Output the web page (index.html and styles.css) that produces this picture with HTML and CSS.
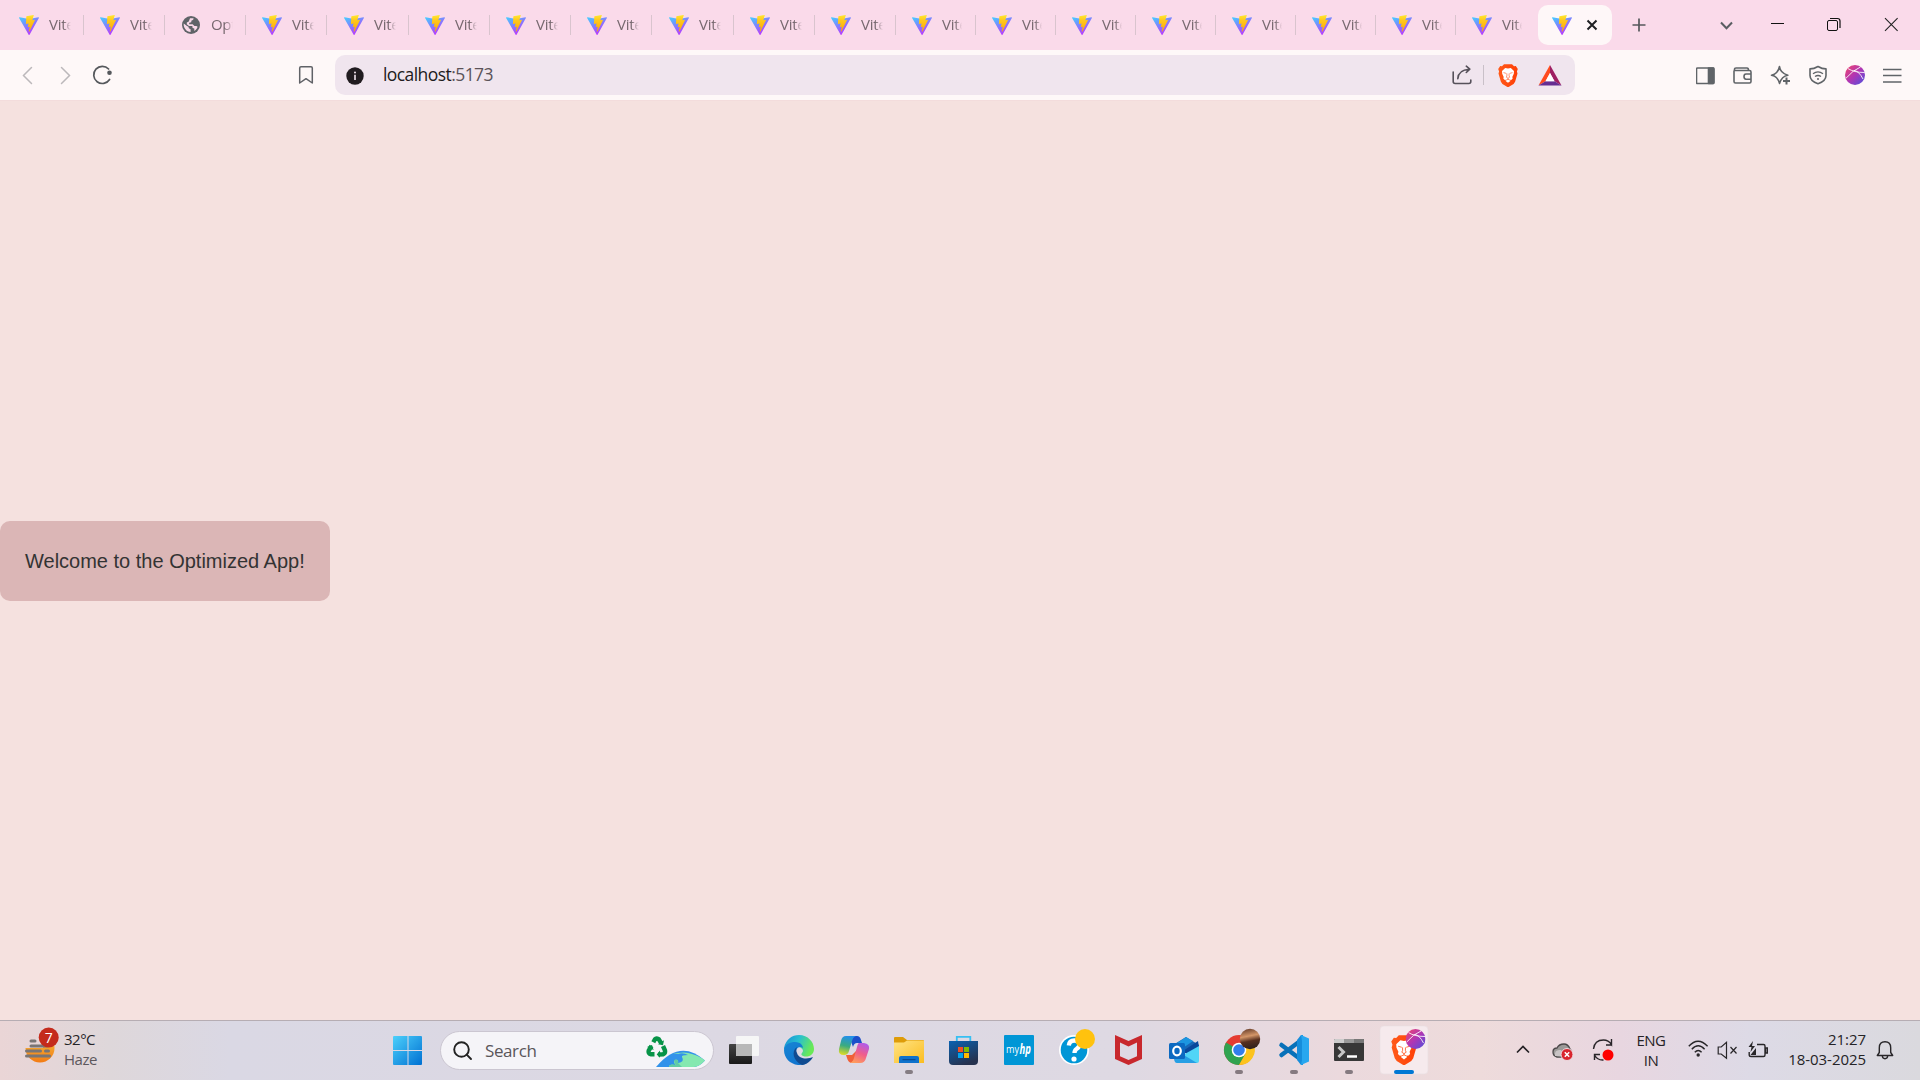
FILE: index.html
```html
<!DOCTYPE html>
<html lang="en">
<head>
<meta charset="utf-8">
<title>Vite + React</title>
<link rel="stylesheet" href="styles.css">
</head>
<body>
<svg class="defs" width="0" height="0">
  <defs>
    <linearGradient id="va" x1="0" y1="0" x2="0.6" y2="1"><stop offset="0" stop-color="#41d1ff"/><stop offset="1" stop-color="#bd34fe"/></linearGradient>
    <linearGradient id="vb" x1="0" y1="0" x2="0" y2="1"><stop offset="0" stop-color="#ffea2e"/><stop offset="0.3" stop-color="#ffc91f"/><stop offset="1" stop-color="#ffa800"/></linearGradient>
    <linearGradient id="sphere" x1="0" y1="0" x2="1" y2="1"><stop offset="0" stop-color="#f2456a"/><stop offset="0.5" stop-color="#b036b4"/><stop offset="1" stop-color="#4a52e0"/></linearGradient>
    <linearGradient id="brave" x1="0" y1="0" x2="1" y2="0"><stop offset="0" stop-color="#ff5a1a"/><stop offset="1" stop-color="#ff3f06"/></linearGradient>
    <symbol id="vite" viewBox="0 0 256 257">
      <path fill="url(#va)" d="M255.153 37.938 134.897 252.976c-2.483 4.44-8.862 4.466-11.382.048L.875 37.958c-2.746-4.814 1.371-10.646 6.827-9.67l120.385 21.517a6.537 6.537 0 0 0 2.322-.004l117.867-21.483c5.438-.991 9.574 4.796 6.877 9.62Z"/>
      <path fill="url(#vb)" d="M185.432.063 96.44 17.501a3.268 3.268 0 0 0-2.634 3.014l-5.474 92.456a3.268 3.268 0 0 0 3.997 3.378l24.777-5.718c2.318-.535 4.413 1.507 3.936 3.838l-7.361 36.047c-.495 2.426 1.782 4.5 4.151 3.78l15.304-4.649c2.372-.72 4.652 1.36 4.15 3.788l-11.698 56.621c-.732 3.542 3.979 5.473 5.943 2.437l1.313-2.028 72.516-144.72c1.215-2.423-.88-5.186-3.54-4.672l-25.505 4.922c-2.396.462-4.435-1.77-3.759-4.114l16.646-57.705c.677-2.35-1.37-4.583-3.769-4.113Z"/>
    </symbol>
    <symbol id="lion" viewBox="0 0 20 23">
      <path fill="url(#brave)" d="M6 .2h8l2 2 1.800-.2 2 3-.9 2.500.6 2-2.400 8.300-1.500 2.200L10.600 23h-1.200l-5-3-1.500-2.200L.5 9.500l.6-2L.2 5l2-3L4 2.200Z"/>
      <path fill="#fff" d="M10 4.600 12.800 4l3.200 3.100-.2 2.700-1.500 3.100.4 1.700-1.500 1.300-1-.2.2 1.200-2.400 1.900-2.400-1.900.2-1.200-1 .2-1.500-1.300.4-1.700-1.500-3.100L4 7.100 7.200 4Z"/>
      <path fill="none" stroke="#ff4a10" stroke-width=".6" d="m5.500 8.600 2.800.8M14.500 8.600l-2.800.8M8.900 9.500v2.500L8.300 13.200 10 14.300 11.700 13.200 11.100 12V9.500M10 14.200v1.300M7.700 16.300 10 15.200l2.300 1.100"/>
    </symbol>
    <symbol id="orb" viewBox="0 0 20 20">
      <circle cx="10" cy="10" r="10" fill="url(#sphere)"/>
      <path fill="none" stroke="#fff" stroke-opacity=".85" stroke-width="1" d="M3 3.600Q9 7.500 19.600 7.500M1 13.200Q8 5 15.500 2M9 5.500Q14 6 18 14"/>
    </symbol>
  </defs>
</svg>

<header class="tabstrip">
  <div class="tab first"><svg class="fav"><use href="#vite"/></svg><span class="title">Vite</span></div>
  <div class="tab"><svg class="fav"><use href="#vite"/></svg><span class="title">Vite</span></div>
  <div class="tab"><svg class="fav" viewBox="0 0 20 20"><circle cx="10" cy="10" r="9" fill="#5f6368"/><path fill="#fadaea" d="M2.700 8.500 6 11l1.500.8.300 1.500 1.800 1v2.600C5.500 16.800 2.300 13 2.700 8.500ZM9 3.200h3.500c.2 1.500-.8 2-2 2.300l-.3 1.700-2 .5v1.600h3.500l1.700 1.800h2l1.200.7c-.6 2-1.900 3.400-3.300 4.200v-2.500l-1.700-.6-.3-1.800H8L5.800 9.200V7.500l2-1Z"/></svg><span class="title">Opt</span></div>
  <div class="tab"><svg class="fav"><use href="#vite"/></svg><span class="title">Vite</span></div>
  <div class="tab wide"><svg class="fav"><use href="#vite"/></svg><span class="title">Vite</span></div>
  <div class="tab"><svg class="fav"><use href="#vite"/></svg><span class="title">Vite</span></div>
  <div class="tab"><svg class="fav"><use href="#vite"/></svg><span class="title">Vite</span></div>
  <div class="tab"><svg class="fav"><use href="#vite"/></svg><span class="title">Vite</span></div>
  <div class="tab wide"><svg class="fav"><use href="#vite"/></svg><span class="title">Vite</span></div>
  <div class="tab"><svg class="fav"><use href="#vite"/></svg><span class="title">Vite</span></div>
  <div class="tab"><svg class="fav"><use href="#vite"/></svg><span class="title">Vite</span></div>
  <div class="tab slim"><svg class="fav"><use href="#vite"/></svg><span class="title">Vite</span></div>
  <div class="tab slim"><svg class="fav"><use href="#vite"/></svg><span class="title">Vite</span></div>
  <div class="tab slim"><svg class="fav"><use href="#vite"/></svg><span class="title">Vite</span></div>
  <div class="tab slim"><svg class="fav"><use href="#vite"/></svg><span class="title">Vite</span></div>
  <div class="tab slim"><svg class="fav"><use href="#vite"/></svg><span class="title">Vite</span></div>
  <div class="tab slim"><svg class="fav"><use href="#vite"/></svg><span class="title">Vite</span></div>
  <div class="tab slim"><svg class="fav"><use href="#vite"/></svg><span class="title">Vite</span></div>
  <div class="tab slim last"><svg class="fav"><use href="#vite"/></svg><span class="title">Vite</span></div>
  <div class="active-tab"><svg class="fav"><use href="#vite"/></svg><svg class="close" viewBox="0 0 12 12"><path d="m1.500 1.500 9 9m0-9-9 9" stroke="#1f2023" stroke-width="2"/></svg></div>
  <svg class="newtab" viewBox="0 0 14 14"><path d="M7 .5v13M.5 7h13" stroke="#55585c" stroke-width="1.700"/></svg>
  <svg class="window-controls" viewBox="0 0 200 50" fill="none">
    <path d="m1 22.500 5.500 5.700 5.500-5.700" stroke="#5a5d62" stroke-width="2"/>
    <path d="M51 23.500h13" stroke="#111" stroke-width="1"/>
    <rect x="107.500" y="20.500" width="10" height="10" rx="1.500" stroke="#111"/><path d="M110 18.500h7.500q2.500 0 2.500 2.500v7" stroke="#111" stroke-width="1.200"/>
    <path d="m165 18.200 12.600 12.600m0-12.600-12.600 12.600" stroke="#222" stroke-width="1.100"/>
  </svg>
</header>

<nav class="toolbar">
  <svg class="nav-icons" viewBox="0 0 100 50" fill="none" stroke-linecap="round">
    <path d="m11.500 17.500-8 8 8 8M41.500 17.500l8 8-8 8" stroke="#bcb8bb" stroke-width="1.500"/>
    <path d="M89.600 29.500a8.600 8.600 0 1 1-1-10.500" stroke="#55585c" stroke-width="1.700"/><circle cx="89.500" cy="22.800" r="2.300" fill="#55585c"/>
  </svg>
  <svg class="bookmark" viewBox="0 0 16 20"><path d="M3 1.700h10q1.300 0 1.300 1.300v15L8 13.700 1.700 18V3Q1.700 1.700 3 1.700Z" fill="none" stroke="#606267" stroke-width="1.500" stroke-linejoin="round"/></svg>
  <div class="omnibox">
    <svg class="info" viewBox="0 0 18 18"><circle cx="9" cy="9" r="8.700" fill="#211c20"/><path d="M9 7.800V13" stroke="#f1e5ee" stroke-width="1.600"/><circle cx="9" cy="5.500" r="1" fill="#f1e5ee"/></svg>
    <span class="url">localhost<span class="port">:5173</span></span>
    <svg class="share" viewBox="0 0 20 20" fill="none" stroke="#56515a" stroke-width="1.600" stroke-linecap="round" stroke-linejoin="round"><path d="M1.200 7v9.500q0 2 2 2h13.600q2 0 2-2V15M5.800 13.800Q6.300 5 17.300 4.300M14.300 1.200l3.500 3-3.500 3.300"/></svg>
    <span class="divider"></span>
    <svg class="shield"><use href="#lion"/></svg>
    <svg class="bat" viewBox="0 0 24 21"><path fill="#ff4b1f" d="M12 0v8L7.500 16.200.5 20.500Z"/><path fill="#9e1f63" d="M12 0v8l4.500 8.200 7 4.300Z"/><path fill="#662d91" d="m.5 20.500 7-4.300h9l7 4.300Z"/><path fill="#fff" d="m12 8 4.500 8.200h-9Z"/></svg>
  </div>
  <svg class="extensions" viewBox="0 0 208 50" fill="none" stroke="#606468" stroke-width="1.600" stroke-linejoin="round">
    <rect x=".5" y="18" width="17.500" height="15.500" rx="1"/><path fill="#606468" d="M12.500 18h5v15.500h-5z"/>
    <path d="M38 20.500v11q0 1.500 1.500 1.500h14q1.500 0 1.500-1.500V22q0-1.500-1.500-1.500H38.500V19q0-1 1.500-1h11q1.500 0 1.500 2.500M55 24h-5q-2 0-2 2.600 0 2.600 2 2.600h5"/>
    <path d="M83.500 16.500q.7 6.500 8.300 8.700-6 1-8.300 8.200-1.800-7.200-8-8.200 6.500-1.200 8-8.700Z"/><path d="M90.500 27.500v7M87 31h7" stroke-width="2"/>
    <path d="M122 16.500q4 2.400 8 2.400v6.600q0 5.500-8 8.300-8-2.800-8-8.300v-6.600q4 0 8-2.400Z"/><path d="M117 23.700q5-3.600 10 0M119 26.500q3-2 6 0" stroke-width="1.400"/><circle cx="122" cy="29" r="1" fill="#606468" stroke="none"/>
    <use href="#orb" x="149" y="15" width="20" height="20" stroke="none"/>
    <path d="M187 19.500h18.500M187 25.500h18.500M187 32h18.500" stroke-width="1.500"/>
  </svg>
</nav>

<main class="page">
  <div class="welcome">Welcome to the Optimized App!</div>
</main>

<footer class="taskbar">
  <div class="weather">
    <svg viewBox="0 0 36 38">
      <defs>
        <linearGradient id="sun" x1="0" y1="0" x2="0" y2="1"><stop offset="0" stop-color="#f5c344"/><stop offset="1" stop-color="#f37c14"/></linearGradient>
        <clipPath id="horizon"><path d="M0 21h18v-4h14v22H0Z"/></clipPath>
      </defs>
      <circle cx="15" cy="21" r="14.500" fill="url(#sun)" clip-path="url(#horizon)"/>
      <path d="M6 14h4M6 19h16M1.500 24h14M20.500 24h3M1.500 29h23" stroke="#797575" stroke-width="3" stroke-linecap="round"/>
      <circle cx="23.700" cy="10.500" r="10" fill="#c42b1c"/><text x="23.700" y="15.800" text-anchor="middle" class="badge">7</text>
    </svg>
    <div class="weather-text"><span>32°C</span><span class="haze">Haze</span></div>
  </div>
  <div class="apps">
    <svg class="app" viewBox="0 0 55 59"><defs><linearGradient id="win" gradientUnits="userSpaceOnUse" x1="13" y1="15" x2="42" y2="44"><stop offset="0" stop-color="#4cd0fb"/><stop offset="1" stop-color="#0070d2"/></linearGradient></defs><path fill="url(#win)" d="M14 15h13.500v14H13V16q0-1 1-1ZM28.500 15H41q1 0 1 1v13H28.500ZM13 30h14.500v14H14q-1 0-1-1ZM28.500 30H42v13q0 1-1 1H28.500Z"/></svg>
    <div class="search">
      <svg class="lens" viewBox="0 0 20 20" fill="none" stroke="#222" stroke-width="1.900" stroke-linecap="round"><circle cx="8.500" cy="8.500" r="7.300"/><path d="m13.700 13.700 4.300 4.300"/></svg>
      <span class="search-text">Search</span>
      <svg class="earth" viewBox="0 0 60 32">
        <path fill="#3292ea" d="M10 31Q34 2 59 24.500 53 31 48 31Z"/><path fill="#84e8b0" d="M27 18q12-3 19 0 8 2 13 6.500Q53 31 48 31H23q0-4 8-1-5-4-2-6 4-1 3 3 7-1 4-6-1-2 6-2-5-3-10-1Z"/><path fill="#61cba5" d="M23 31q1-4 7-2-3-4-1-5.500 4-.5 3 3.500l4 4Z"/>
        <path d="M7.300 6.300 9 3.200q1.200-1.400 3.700 0l2.500 4M17 10l2 4.500q.5 3-2 3.800l-4.500.2M8.500 18.300H5q-3-.5-2.300-3.600L5.500 10" fill="none" stroke="#079348" stroke-width="4.400"/><path d="m12 8.200 5 1 1-5M14 14.500l-3.300 4 3.300 3.300M1 11l5-2 1.600 5" fill="#079348"/>
      </svg>
    </div>
    <svg class="app" viewBox="0 0 55 59"><defs><linearGradient id="tv" x1="0" y1="0" x2="0" y2="1"><stop offset="0" stop-color="#444"/><stop offset="1" stop-color="#191919"/></linearGradient></defs><rect x="12" y="23" width="23" height="20" rx="1" fill="url(#tv)"/><rect x="19" y="15" width="23" height="20" rx="1" fill="#f6f6f6"/><path fill="#b8b8b8" d="M19 23h16v12H20q-1 0-1-1Z"/></svg>
    <svg class="app" viewBox="0 0 55 59"><defs><linearGradient id="ea" x1="0" y1="0" x2="1" y2=".35"><stop offset="0" stop-color="#168bd7"/><stop offset=".5" stop-color="#28bfd0"/><stop offset="1" stop-color="#69e957"/></linearGradient><linearGradient id="eb" x1="0" y1="0" x2=".5" y2="1"><stop offset="0" stop-color="#1685d4"/><stop offset="1" stop-color="#1174ce"/></linearGradient></defs>
      <path fill="url(#ea)" d="M12 27C14 18 20 14 27 14c9 0 15 7 15 14 0 6-6 9-11 7-2-1-2-2-1-3 3-3-1-7-8-7-5 0-8 1-10 4Z"/><path fill="url(#eb)" d="M12 29c1-6 6-8 11-8 6 0 8 4 8 6-4-3-8 1-7 6 1 5 6 9 11 9-3 2-7 2-9 2-8-1-14-7-14-15Z"/><path fill="#104b91" d="M25 26c-6 4-4 14 5 18 4 0 9-4 11-8-4 2-14 3-16-4-1-2-1-4 0-6Z"/></svg>
    <svg class="app" viewBox="0 0 55 59"><defs><linearGradient id="ca" x1=".4" y1="0" x2=".2" y2="1"><stop offset="0" stop-color="#2390e8"/><stop offset=".5" stop-color="#3aab80"/><stop offset="1" stop-color="#e5dd21"/></linearGradient><linearGradient id="cb" x1=".7" y1="0" x2=".3" y2="1"><stop offset="0" stop-color="#b05bea"/><stop offset=".5" stop-color="#f05e8b"/><stop offset="1" stop-color="#ff9c5c"/></linearGradient></defs>
      <path fill="#1b4fca" d="M22 15h8q3 0 4 4l1 3h-5q-3 0-4 4Z"/><path fill="#f06038" d="M24 42q-3-1-4-5l-1-3h6l5-5-2 10Z"/>
      <path fill="url(#ca)" d="M19 15h10q-3 1-4 5l-3 10q-1 4-5 4-6 0-5-6l2-8q1-5 5-5Z"/><path fill="url(#cb)" d="M32 22h5q6 1 5 6l-3 9q-1 5-6 5H23q3-1 4-5l3-11q1-4 2-4Z"/></svg>
    <svg class="app" viewBox="0 0 55 59"><defs><linearGradient id="fo" x1="0" y1="0" x2="1" y2="1"><stop offset="0" stop-color="#ffe384"/><stop offset="1" stop-color="#fbbd20"/></linearGradient></defs><path fill="#de9c09" d="M12 17q0-1 1-1h8l4 3h16q1 0 1 1v6H12Z"/><path fill="url(#fo)" d="M12 21.500h10l3-2H42V42H12Z"/><path fill="#0f72cc" d="M17 42v-5q0-2 2-2h16q2 0 2 2v5Z"/><path d="M20.500 38.700h13" stroke="#0a4386"/><rect x="23" y="49" width="8" height="4" rx="2" fill="#857d83"/></svg>
    <svg class="app" viewBox="0 0 55 59"><defs><linearGradient id="st" x1="0" y1="0" x2=".5" y2="1"><stop offset="0" stop-color="#0a62b1"/><stop offset="1" stop-color="#26324f"/></linearGradient></defs><path fill="url(#st)" d="M12 20h29v20q0 4-4 4H16q-4 0-4-4Z"/><path d="M19.800 20v-4.200h13.500V20" fill="none" stroke="#37bff2" stroke-width="1.800"/><path fill="#f25022" d="M21 26h5v5h-5z"/><path fill="#7fba00" d="M27 26h5v5h-5z"/><path fill="#00a4ef" d="M21 32h5v5h-5z"/><path fill="#ffb900" d="M27 32h5v5h-5z"/></svg>
    <svg class="app" viewBox="0 0 55 59"><rect x="12" y="14" width="30" height="30" rx="1" fill="#0096d6"/><text x="14" y="32" class="my" textLength="13" lengthAdjust="spacingAndGlyphs">my</text><text x="27.500" y="33" class="hp" textLength="11.500" lengthAdjust="spacingAndGlyphs">hp</text></svg>
    <svg class="app" viewBox="0 0 55 59"><circle cx="27" cy="29" r="15" fill="#fff"/><circle cx="27" cy="29" r="13.300" fill="#0096d6"/><path d="M21.800 24.500q.5-5 5.500-5t5.200 4q0 2.500-3 4.500-2 1.300-2 4" fill="none" stroke="#fff" stroke-width="4.300"/><circle cx="27" cy="38" r="2.600" fill="#fff"/><circle cx="38" cy="18" r="10" fill="#ffc20e"/></svg>
    <svg class="app" viewBox="0 0 55 59"><path fill="#c8282d" d="m13 14 13.500 6L40 14v24l-13.500 6L13 38Z"/><path fill="#ded9e4" d="m18 21.500 8.500 4 8.500-4v13.800L26.500 39 18 35.300Z"/></svg>
    <svg class="app" viewBox="0 0 55 59"><path fill="#1766b5" d="M16 24 29 16l13 8v8H16Z"/><path fill="#1c96e0" d="m20 22 9-6 7 4-13 9Z"/><path fill="#0a479b" d="m26 30 15-10 1 6-11 8Z"/><path fill="#50d5f7" d="m42 25-16 9v8h14q2 0 2-2Z"/><path fill="#279fe4" d="M17 36q0 6 3 6h20L20 30Z"/><rect x="12" y="22" width="16" height="16" rx="1.500" fill="#0b69c1"/><ellipse cx="20" cy="30" rx="3.800" ry="4.300" fill="none" stroke="#fff" stroke-width="2.200"/></svg>
    <svg class="app" viewBox="0 0 55 59"><circle cx="27" cy="29" r="15" fill="#e53b31"/><path fill="#30a350" d="M27 29 14 21.500A15 15 0 0 0 27 44l7-11Z"/><path fill="#fcc31d" d="M27 22h14a15 15 0 0 1-14 22l6.500-11.500Z"/><circle cx="27" cy="29" r="7.300" fill="#fff"/><circle cx="27" cy="29" r="5.800" fill="#337eec"/><defs><linearGradient id="ph" x1=".4" y1="0" x2=".6" y2="1"><stop offset="0" stop-color="#70452f"/><stop offset=".35" stop-color="#d49668"/><stop offset=".6" stop-color="#57301f"/><stop offset="1" stop-color="#2b201c"/></linearGradient></defs><circle cx="38" cy="18" r="10.200" fill="url(#ph)"/><rect x="23" y="49" width="8" height="4" rx="2" fill="#857a80"/></svg>
    <svg class="app" viewBox="0 0 55 59"><path d="m14.500 24 20 15M14.500 34l20-15" stroke="#0871b9" stroke-width="4.500" stroke-linecap="round"/><path fill="#168ddb" d="m34 14-4 5v20l4 5h2V14Z"/><path fill="#28a7ef" d="m34 14 8 3.500v23L34 44l1-5V20Z"/><rect x="23" y="49" width="8" height="4" rx="2" fill="#857a80"/></svg>
    <svg class="app" viewBox="0 0 55 59"><rect x="12" y="18" width="30" height="22" rx="1" fill="#373737"/><path fill="#ccc" d="M13 18h9v4H12v-3q0-1 1-1Z"/><path fill="#999" d="M22 18h10v4H22z"/><path fill="#777" d="M32 18h9q1 0 1 1v3H32Z"/><path d="m16.500 26 5 5-5 5" fill="none" stroke="#c6c6c6" stroke-width="3"/><path d="M25 35.500h10" stroke="#fff" stroke-width="2.500"/><rect x="23" y="49" width="8" height="4" rx="2" fill="#857a80"/></svg>
    <svg class="app" viewBox="0 0 55 59"><rect x="3" y="5" width="48" height="48" rx="4" fill="#f6eaed" stroke="#e9dfe2" stroke-width=".6"/><use href="#lion" x="14" y="14" width="26" height="30"/><use href="#orb" x="28.500" y="8" width="20" height="20"/><rect x="17" y="49" width="20" height="4" rx="2" fill="#0078d4"/></svg>
  </div>
  <div class="tray">
    <svg class="tray-left" viewBox="0 0 110 59" fill="none">
      <path d="m7 31.500 6-6 6 6" stroke="#252225" stroke-width="1.700"/>
      <path fill="#9b9997" stroke="#4b4849" stroke-width="1.300" d="M47 36q-4-1-4-5 0-4 4-4 2-4 7-4 4 0 6 5 2 2 1 8Z"/><path fill="#c9c4c5" d="M45 35q-1-7 6-6l7 7Z"/><circle cx="57" cy="33.500" r="6" fill="#d9252d" stroke="#eddbe1"/><path d="m54.800 31.300 4.400 4.400m0-4.400-4.400 4.400" stroke="#fff" stroke-width="1.500"/>
      <path d="M83.500 28q1-9 10-9 5 0 8 4.500V18M101.500 24h-5.500M84.500 39v-5.500H90M84.500 34q3 5.500 9 5" stroke="#292529" stroke-width="1.400"/><circle cx="98" cy="34" r="5.500" fill="#fe0000"/>
    </svg>
    <div class="lang"><span>ENG</span><span>IN</span></div>
    <svg class="status" viewBox="0 0 82 59" fill="none" stroke="#282629" stroke-width="1.400">
      <path d="M.8 25.200q9.200-10 18.800 0M3.800 28.200q6.400-7 12.800 0M6.800 31.200q3.400-3.500 6.800 0"/><circle cx="10.200" cy="34" r="1.700" fill="#282629" stroke="none"/>
      <path d="M30.200 26h3l5.300-4.700v16L33.200 33h-3ZM42.500 26l6 6.500m0-6.500-6 6.500" stroke-width="1.200"/>
      <path d="M69 23.500h6.500q1.500 0 1.500 1.500v9q0 1.500-1.500 1.500H63q-1.800 0-1.800-1.800V31M77.500 27v5h1.800v-5Z"/><path fill="#282629" stroke="none" d="m65 20-4.500 6h3l-1 5 4.500-6h-3Zm3 7v7h-5.500Z"/>
    </svg>
    <div class="clock"><span>21:27</span><span>18-03-2025</span></div>
    <svg class="bell" viewBox="0 0 18 22" fill="none" stroke="#282629" stroke-width="1.400" stroke-linejoin="round"><path d="M9 1.700q5.700 0 5.700 6v4.800l2 3H1.300l2-3V7.700q0-6 5.700-6ZM6.300 16q.3 2.700 2.700 2.700t2.700-2.700"/></svg>
  </div>
</footer>
</body>
</html>
```
FILE: styles.css
```css
* { box-sizing: border-box; }
body {
  margin: 0;
  width: 1920px;
  height: 1080px;
  overflow: hidden;
  display: flex;
  flex-direction: column;
  background: #f5e1df;
  font-family: "Open Sans", "Noto Sans", sans-serif;
}
svg { display: block; flex: none; }
.defs { position: absolute; }

.tabstrip { height: 50px; flex: none; display: flex; align-items: center; background: #fadaea; }
.tab {
  width: 81px;
  height: 20px;
  flex: none;
  display: flex;
  align-items: center;
  padding-left: 16px;
  border-right: 1px solid #d9c4ce;
}
.tab.first { width: 84px; padding-left: 19px; }
.tab.wide { width: 82px; padding-left: 17px; }
.tab.slim { width: 80px; }
.tab.last { border-right-color: transparent; }
.fav { width: 20px; height: 20px; }
.title {
  width: 22px;
  margin: -2px 0 0 10px;
  overflow: hidden;
  white-space: nowrap;
  font-size: 15px;
  line-height: 20px;
  letter-spacing: -0.3px;
  color: #77686f;
  -webkit-mask-image: linear-gradient(90deg, #000 65%, transparent);
  mask-image: linear-gradient(90deg, #000 65%, transparent);
}
.slim .title { width: 20px; }
.active-tab {
  width: 74px;
  height: 40px;
  flex: none;
  display: flex;
  align-items: center;
  margin-left: 2px;
  padding-left: 14px;
  gap: 14px;
  border-radius: 10px;
  background: #fef7f8;
}
.close { width: 12px; height: 12px; }
.newtab { width: 14px; height: 14px; margin-left: 20px; }
.window-controls { width: 200px; height: 50px; margin-left: 74px; }

.toolbar { height: 50px; flex: none; display: flex; align-items: center; background: #fef8f8; }
.nav-icons { width: 100px; height: 50px; margin-left: 20px; }
.bookmark { width: 16px; height: 20px; margin-left: 178px; }
.omnibox {
  width: 1240px;
  height: 40px;
  flex: none;
  display: flex;
  align-items: center;
  margin-left: 21px;
  padding-left: 11px;
  border-radius: 10px;
  background: #f0e5ee;
}
.info { width: 18px; height: 18px; margin-top: 2px; }
.url { width: 1069px; flex: none; margin: -2px 0 0 19px; font-size: 17.5px; letter-spacing: -0.57px; line-height: 24px; color: #211b20; }
.port { color: #5b5359; }
.share { width: 20px; height: 20px; }
.divider { width: 1px; height: 20px; margin-left: 11px; background: #c9c0c8; }
.shield { width: 20px; height: 23px; margin-left: 14px; }
.bat { width: 24px; height: 21px; margin-left: 20px; }
.extensions { width: 208px; height: 50px; margin-left: 121px; }

.page { height: 920px; flex: none; display: flex; align-items: center; padding-top: 1px; border-top: 1px solid #f3dcdc; background: #f5e1df; }
.welcome {
  width: 330px;
  height: 80px;
  padding: 0 25px;
  border-radius: 10px;
  background: #dbb6b6;
  color: #333;
  font: 20px/80px "Liberation Sans", Arial, sans-serif;
  white-space: nowrap;
}

.taskbar {
  height: 60px;
  flex: none;
  display: flex;
  border-top: 1px solid #b6adb3;
  color: #252326;
  background: linear-gradient(90deg, #ead5d6 0, #ded7da 110px, #dad8e4 230px, #dcd8e3 700px, #ded9e3 1120px, #ebd9dd 1340px, #eedbdb 1480px, #e8d6e0 1620px, #dddae6 1750px, #dad9de 1920px);
}
.weather { width: 380px; display: flex; padding: 6px 0 0 25px; }
.weather svg { width: 36px; height: 38px; }
.badge { font: 14px "Open Sans", sans-serif; fill: #fff; }
.weather-text { display: flex; flex-direction: column; margin: 2px 0 0 3px; font-size: 15px; line-height: 20px; letter-spacing: -0.5px; }
.haze { color: #5d585d; }
.apps { width: 1052px; display: flex; }
.app { width: 55px; height: 59px; }
.search {
  width: 274px;
  height: 39px;
  flex: none;
  display: flex;
  align-items: center;
  margin: 10px 3px 0 5px;
  padding-left: 12px;
  border: 1px solid #cbc6d1;
  border-radius: 20px;
  background: #f5f4f8;
}
.lens { width: 20px; height: 20px; }
.search-text { width: 161px; flex: none; margin-left: 12px; font-size: 17px; letter-spacing: -0.4px; color: #5a565a; }
.earth { width: 60px; height: 32px; margin-top: 2px; }
.my { font: 10px "Open Sans", sans-serif; fill: #fff; }
.hp { font: italic bold 15px "Open Sans", sans-serif; fill: #fff; }

.tray { display: flex; margin-left: 78px; }
.tray-left { width: 110px; height: 59px; }
.lang { width: 62px; display: flex; flex-direction: column; align-items: center; padding-top: 9px; font-size: 15px; line-height: 20px; letter-spacing: -0.5px; }
.status { width: 82px; height: 59px; margin-left: 6px; }
.clock { width: 96px; display: flex; flex-direction: column; align-items: flex-end; padding-top: 8px; font-size: 15px; line-height: 20px; letter-spacing: -0.05px; }
.bell { width: 18px; height: 22px; margin: 19px 0 0 10px; }
```
